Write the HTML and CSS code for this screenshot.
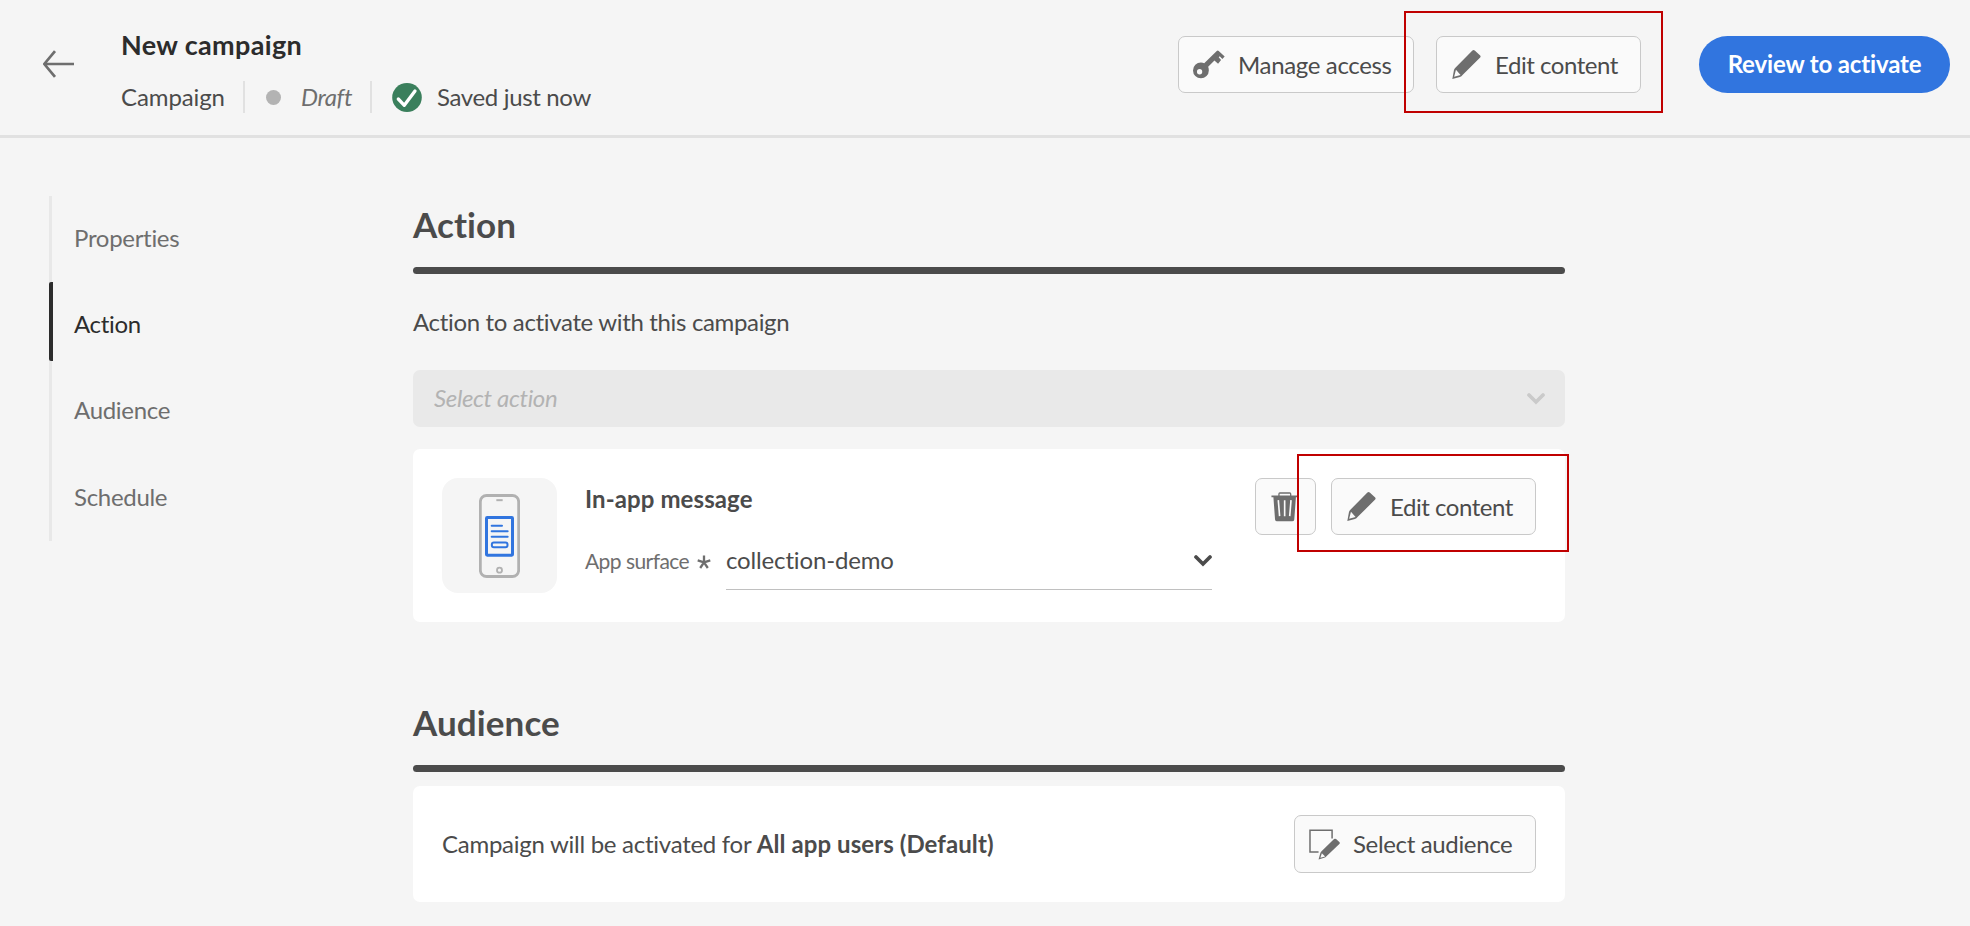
FILE: index.html
```html
<!DOCTYPE html>
<html lang="en">
<head>
<meta charset="utf-8">
<title>New campaign</title>
<link rel="stylesheet" href="styles.css">
</head>
<body>
<svg class="sprite" aria-hidden="true">
  <symbol id="pencil" viewBox="0 0 86 88">
    <path fill-rule="evenodd" d="M61 1.500Q64.500-1 68 1.500L84.500 17Q87 20 84.500 23L31 76Q28 80 23 82L0 88L5 61Q6 57 10 53ZM11 60L5.500 81L25 75.500Z"/>
  </symbol>
</svg>

<header class="header">
  <button class="back" aria-label="Back">
    <svg width="31" height="28" viewBox="0 0 31 28"><path d="M31 14H1.500M12 1.200L1.300 14L12 26.800" fill="none" stroke="#6e6e6e" stroke-width="2.700"/></svg>
  </button>
  <div class="heading">
    <h1 class="title">New campaign</h1>
    <div class="meta">
      <span class="meta-type">Campaign</span>
      <span class="divider"></span>
      <span class="dot"></span>
      <em class="draft">Draft</em>
      <span class="divider"></span>
      <svg class="check" width="30" height="29" viewBox="0 0 30 29"><ellipse cx="15" cy="14.500" rx="14.800" ry="14.400" fill="#3a7f5c"/><path d="M6.300 16L12.300 22.300L23 8" fill="none" stroke="#fff" stroke-width="3.300" stroke-linecap="round" stroke-linejoin="round"/></svg>
      <span class="saved">Saved just now</span>
    </div>
  </div>
  <div class="actions">
    <button class="btn btn-manage">
      <svg width="32" height="29" viewBox="0 0 97 86"><path fill-rule="evenodd" d="M24 37Q30 37 34 39L72 2Q75-1 78 2L96 19L89 26L81 18L78 21L85 29L76 41L65 31L46 50Q48 55 48 61A24 24 0 1 1 24 37ZM20 57A8 8 0 1 0 20 73A8 8 0 1 0 20 57Z"/></svg>
      <span>Manage access</span>
    </button>
    <button class="btn btn-edit">
      <svg width="29" height="29"><use href="#pencil"/></svg>
      <span>Edit content</span>
    </button>
    <button class="btn-primary">Review to activate</button>
  </div>
</header>

<div class="body">
  <nav class="nav">
    <a class="nav-item">Properties</a>
    <a class="nav-item active">Action</a>
    <a class="nav-item">Audience</a>
    <a class="nav-item">Schedule</a>
  </nav>

  <main class="main">
    <section class="section">
      <h2 class="section-title">Action</h2>
      <div class="rule"></div>
      <p class="hint">Action to activate with this campaign</p>
      <div class="select">
        <em>Select action</em>
        <svg width="18" height="12" viewBox="0 0 18 12"><path d="M2 2L9 9L16 2" fill="none" stroke="#cacaca" stroke-width="3.700" stroke-linecap="round"/></svg>
      </div>
      <div class="card card-action">
        <div class="tile">
          <svg class="phone" width="41" height="84" viewBox="237 160 123 251">
            <rect x="241" y="164" width="115" height="243" rx="19" stroke="#b1b1b1" stroke-width="8.500"/>
            <path d="M289 178H308" stroke="#b1b1b1" stroke-width="6"/>
            <circle cx="298.500" cy="388" r="7.500" stroke="#b1b1b1" stroke-width="5.500"/>
            <rect x="259.500" y="230" width="78" height="113" rx="2" stroke="#3175df" stroke-width="9"/>
            <path d="M275 255H306M275 271.500H323M275 288H323" stroke="#3175df" stroke-width="6" stroke-linecap="round"/>
            <rect x="275.500" y="305" width="47" height="14" rx="6" stroke="#3175df" stroke-width="6"/>
          </svg>
        </div>
        <div class="details">
          <h3 class="card-title">In-app message</h3>
          <div class="field">
            <label class="label">App surface</label>
            <svg class="star" width="14" height="14" viewBox="0 0 14 14"><path d="M7 7.300V.500M7 7.300L.700 5.300M7 7.300L3.200 13M7 7.300L10.800 13M7 7.300L13.300 5.300" stroke="#6e6e6e" stroke-width="2.300" fill="none"/></svg>
            <div class="picker">
              <span>collection-demo</span>
              <svg width="18" height="12" viewBox="0 0 18 12"><path d="M2 2L9 9L16 2" fill="none" stroke="#4b4b4b" stroke-width="3.700" stroke-linecap="round"/></svg>
            </div>
          </div>
        </div>
        <div class="card-actions">
          <button class="btn btn-trash" aria-label="Delete">
            <svg width="27" height="30" viewBox="0 0 82 92"><path fill-rule="evenodd" d="M22 11V6Q22 1 27 1H57Q62 1 62 6V11H81V16H76L71 84Q70 90 65 90H18Q13 90 12 84L7 16H1V11ZM26 11H58V5H26Z"/><path d="M22 25L26 74M41.500 25V74M61 25L57 74" stroke="#fafafa" stroke-width="5"/></svg>
          </button>
          <button class="btn btn-edit">
            <svg width="29" height="29"><use href="#pencil"/></svg>
            <span>Edit content</span>
          </button>
        </div>
        <div class="highlight highlight-card"></div>
      </div>
    </section>

    <section class="section section-audience">
      <h2 class="section-title">Audience</h2>
      <div class="rule"></div>
      <div class="card card-audience">
        <p class="audience-text">Campaign will be activated for <b>All app users (Default)</b></p>
        <button class="btn btn-select">
          <svg width="31" height="31" viewBox="0 0 94 93"><path d="M70 28V3H3V69H29" fill="none" stroke="#6e6e6e" stroke-width="4.500"/><path fill-rule="evenodd" d="M76 30Q79 28 82 30L92 39Q95 42 92 45L53 82Q50 85 46 87L29 92L34 74Q35 70 38 67ZM39 73L34.500 87L49 83Z"/></svg>
          <span>Select audience</span>
        </button>
      </div>
    </section>
  </main>
</div>
<div class="highlight highlight-header"></div>
</body>
</html>
```
FILE: styles.css
```css
* { box-sizing: border-box; }

body {
  margin: 0;
  position: relative;
  height: 926px;
  overflow: hidden;
  background: #f5f5f5;
  color: #4b4b4b;
  font: 24px/30px Lato, "Noto Sans", sans-serif;
  font-variant-ligatures: none;
  letter-spacing: -0.35px;
}

h1, h2, h3, p { margin: 0; }
svg { display: block; flex: none; fill: #6e6e6e; }
.sprite { position: absolute; width: 0; height: 0; }

button {
  padding: 0;
  border: 0;
  background: none;
  color: inherit;
  font: inherit;
  letter-spacing: inherit;
}

/* Header */
.header {
  display: flex;
  align-items: flex-start;
  height: 138px;
  padding: 29px 20px 0 43px;
  border-bottom: 3px solid #e1e1e1;
}
.back { margin: 21px 47px 0 0; }
.title {
  height: 30px;
  color: #2c2c2c;
  font-size: 27px;
  line-height: 32px;
  letter-spacing: 0.35px;
}
.meta {
  display: flex;
  align-items: center;
  height: 32px;
  margin-top: 22px;
}
.meta-type { width: 122px; letter-spacing: -0.1px; }
.divider { width: 2px; height: 32px; background: #e1e1e1; }
.dot { width: 15px; height: 15px; margin: 0 20px 0 21px; border-radius: 50%; background: #b3b3b3; }
.draft { width: 69px; color: #6e6e6e; }
.check { margin: 0 15px 0 20px; }

.actions { display: flex; margin: 7px 0 0 auto; }
.btn {
  display: flex;
  align-items: center;
  height: 57px;
  border: 1px solid #c9c9c9;
  border-radius: 7px;
  background: #fafafa;
  white-space: nowrap;
}
.btn-manage { width: 236px; margin-right: 22px; padding-left: 14px; gap: 13px; }
.btn-edit { width: 205px; padding-left: 15px; gap: 14px; letter-spacing: -0.45px; }
.btn-primary {
  width: 251px;
  height: 57px;
  margin-left: 58px;
  padding-bottom: 1px;
  border-radius: 29px;
  background: #3175df;
  color: #fff;
  font-weight: 700;
  letter-spacing: -0.15px;
}

/* Body */
.body { display: flex; }
.nav {
  width: 300px;
  height: 345px;
  margin: 58px 64px 0 49px;
  border-left: 3px solid #e8e8e8;
}
.nav-item {
  display: flex;
  align-items: center;
  height: 79px;
  margin: 0 0 7.200px -3px;
  padding: 5px 0 0 25px;
  color: #6e6e6e;
  letter-spacing: -0.3px;
}
.active { color: #2c2c2c; padding-left: 21px; border-left: 4px solid #2c2c2c; border-radius: 2px; }

.main { width: 1152px; padding-top: 65px; }
.section-title { font-size: 35px; line-height: 42px; letter-spacing: 0.1px; }
.rule { height: 7px; margin-top: 22px; border-radius: 4px; background: #4b4b4b; }
.hint { margin-top: 33px; letter-spacing: -0.34px; }
.select {
  display: flex;
  align-items: center;
  justify-content: space-between;
  height: 57px;
  margin-top: 33px;
  padding: 0 20px 0 21px;
  border-radius: 7px;
  background: #e9e9e9;
  color: #b3b3b3;
}
.select em { padding-bottom: 1px; }
.card { border-radius: 7px; background: #fff; }
.card-action {
  position: relative;
  display: flex;
  height: 173px;
  margin-top: 22px;
  padding: 29px;
}
.tile {
  display: flex;
  align-items: center;
  justify-content: center;
  width: 115px;
  height: 115px;
  border-radius: 16px;
  background: #f5f5f5;
}
.phone { fill: none; }
.details { width: 628px; margin-left: 28px; padding-top: 6px; }
.card-title { font-size: 24px; line-height: 30px; letter-spacing: 0.1px; }
.field { display: flex; margin-top: 27px; }
.label { width: 112px; padding-top: 5px; color: #6e6e6e; font-size: 21px; letter-spacing: -0.55px; }
.star { margin: 14px 15px 0 0; }
.picker {
  display: flex;
  justify-content: space-between;
  width: 486px;
  height: 49px;
  padding-top: 4px;
  border-bottom: 1px solid #c0c0c0;
  letter-spacing: -0.15px;
}
.picker svg { margin-top: 10px; }
.card-actions { display: flex; margin-left: 42px; }
.btn-trash { width: 61px; margin-right: 15px; padding-left: 15px; }

.section-audience { margin-top: 79px; }
.card-audience {
  display: flex;
  align-items: center;
  justify-content: space-between;
  height: 116px;
  margin-top: 14px;
  padding: 0 29px;
}
.audience-text { letter-spacing: -0.27px; }
.audience-text b { letter-spacing: 0.08px; }
.btn-select { width: 242px; height: 58px; padding-left: 14px; gap: 13px; }

/* Callout frames lying over the interface */
.highlight { position: absolute; border: 2px solid #c00000; }
.highlight-header { left: 1404px; top: 11px; width: 259px; height: 102px; }
.highlight-card { left: 884px; top: 5px; width: 272px; height: 98px; }
```
